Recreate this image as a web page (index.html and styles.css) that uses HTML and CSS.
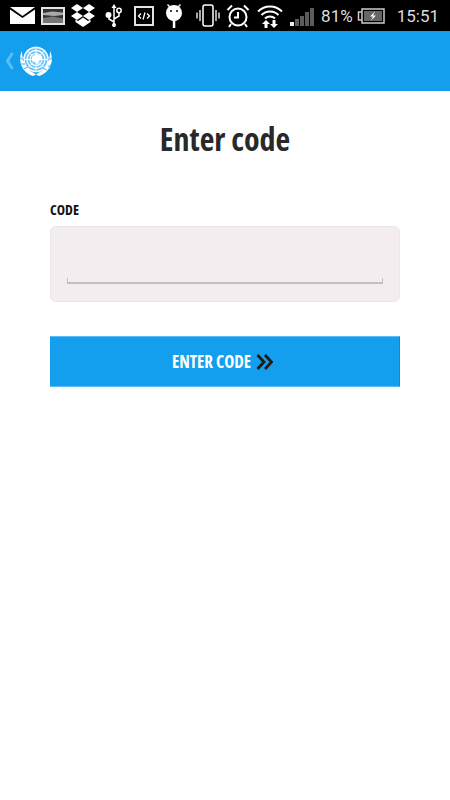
FILE: index.html
```html
<!DOCTYPE html>
<html lang="en">

<head>
    <title>Enter code</title>
    <meta charset="UTF-8">
    <meta name="viewport" content="width=device-width, initial-scale=1">
    <link rel="stylesheet" href="styles.css">
</head>

<body>
    <div class="status-bar">
        <div class="status-left">
            <svg width="25" height="17" viewBox="0 0 25 17"><path d="M0 0h25L12.500 9z" fill="#fff"/><path d="M0 2.500l12.500 8.500L25 2.500V17H0z" fill="#fff"/></svg>
            <svg class="icon-gallery" width="24" height="18" viewBox="0 0 24 18"><rect x="1" y="1" width="22" height="16" fill="#333" stroke="#e4e4e4" stroke-width="2"/><path d="M2 6l9-1.500 11 1v2.500l-9 1-11-1z" fill="#aaa"/><path d="M2 11l10-1.500 10 2V16H2z" fill="#777"/></svg>
            <svg class="icon-dropbox" width="24" height="23" viewBox="0 0 24 23" fill="#fff"><path d="M6 0l6 4-6 4-6-4z"/><path d="M18 0l6 4-6 4-6-4z"/><path d="M6 8l6 4-6 4-6-4z"/><path d="M18 8l6 4-6 4-6-4z"/><path d="M12 13.500l5 3.500 2.500-1.500V18L12 23l-7.500-5v-2.500L7 17z"/></svg>
            <svg class="icon-usb" width="18" height="24" viewBox="0 0 18 24" fill="none" stroke="#fff" stroke-width="1.500"><path d="M9 2v21M9 18l-5-3v-2M9 15l5-3V9"/><circle cx="3.500" cy="11" r="2.200" fill="#fff"/><circle cx="14" cy="6.500" r="2.200"/><circle cx="9" cy="21" r="2" fill="#fff" stroke="none"/><path d="M9 0l2.500 4h-5z" fill="#fff" stroke="none"/></svg>
            <svg class="icon-code" width="20" height="20" viewBox="0 0 20 20"><rect x="1" y="1" width="18" height="18" fill="none" stroke="#e4e4e4" stroke-width="2"/><path d="M7 7.500L4.500 10 7 12.500M13 7.500l2.500 2.500-2.500 2.500M11 6.500l-2 7" fill="none" stroke="#fff" stroke-width="1.300"/></svg>
            <svg class="icon-android" width="16" height="24" viewBox="0 0 16 24" fill="#fff"><circle cx="8" cy="9" r="8"/><rect x="6.800" y="14" width="2.500" height="10"/><path d="M2 0l3 3-1 1-3-3zM14 0l-3 3 1 1 3-3z"/><circle cx="5" cy="7" r="1" fill="#000"/><circle cx="11" cy="7" r="1" fill="#000"/></svg>
            <svg class="icon-vibrate" width="24" height="24" viewBox="0 0 24 24" fill="none" stroke="#ddd" stroke-width="1.500"><rect x="7" y="1" width="10" height="21" rx="2" stroke="#fff"/><path d="M4 6v11M1 8.500v6M20 6v11M23 8.500v6"/></svg>
        </div>
        <div class="status-right">
            <svg width="24" height="24" viewBox="0 0 24 24" fill="none" stroke="#fff" stroke-width="2"><circle cx="12" cy="13" r="8.500"/><path d="M12 8v5.500H8M1.500 6L6 1.500M22.500 6L18 1.500M5 20l-2 3M19 20l2 3"/></svg>
            <svg class="icon-wifi" width="26" height="27" viewBox="0 0 26 27" fill="none" stroke="#fff" stroke-width="2"><path d="M1 9.500a17 17 0 0 1 24 0M4.500 13a12 12 0 0 1 17 0M8 16.500a7 7 0 0 1 10 0"/><path d="M9 18l-4 4h2.500v4h3v-4H13zM17 26l4-4h-2.500v-4h-3v4H13z" fill="#fff" stroke="none"/></svg>
            <svg class="icon-signal" width="24" height="18" viewBox="0 0 24 18"><rect x="0" y="14" width="4" height="4" fill="#eee"/><rect x="5" y="11" width="4" height="7" fill="#5c5c5c"/><rect x="10" y="8" width="4" height="10" fill="#5c5c5c"/><rect x="15" y="4" width="4" height="14" fill="#5c5c5c"/><rect x="20" y="0" width="4" height="18" fill="#5c5c5c"/></svg>
            <span class="status-text">81%</span>
            <svg width="28" height="16" viewBox="0 0 28 16"><path d="M5 4H1.500v8H5" fill="none" stroke="#ccc" stroke-width="1.500"/><rect x="5" y="1" width="22" height="14" fill="none" stroke="#ccc" stroke-width="1.500"/><rect x="7" y="3" width="18" height="10" fill="#666"/><path d="M18 3.500l-5 5h3l-2 4 5-5h-3z" fill="#fff"/></svg>
            <span class="status-text status-time">15:51</span>
        </div>
    </div>

    <header class="app-bar">
        <svg class="back" width="11" height="18" viewBox="0 0 11 18"><path d="M8.500 1L3.500 9l5 8" fill="none" stroke="#5bbcf6" stroke-width="3"/></svg>
        <svg class="un-logo" width="34" height="31" viewBox="0 0 34 31">
            <circle cx="17" cy="13.500" r="13" fill="#6cc4f6"/>
            <circle cx="17" cy="13.500" r="12" fill="none" stroke="#fff" stroke-width="1.300"/>
            <circle cx="17" cy="13.500" r="9" fill="none" stroke="#fff" stroke-width="1.300"/>
            <circle cx="17" cy="13.500" r="6" fill="none" stroke="#fff" stroke-width="1.100"/>
            <path d="M17 1v25M4.500 13.500h25M8.200 4.700l17.600 17.600M25.800 4.700L8.200 22.300" stroke="#fff" stroke-width=".9"/>
            <path d="M13 11l4-3 5 2 1 4-3 1-1 4-3-3-3-1z" fill="#fff"/>
            <path d="M3 5C-1 13 1 25 14 30l3-1.500-3-2C7 24 3 15 3 5zM31 5c4 8 2 20-11 25l-3-1.500 3-2c7-2.500 11-11.500 11-21.500z" fill="#fff"/>
            <path d="M1 12l4 2M2 18l4 0M5 23l4-2M29 21l4-3M28 24l-4-2M33 12l-4 2" stroke="#149eee" stroke-width=".8"/>
        </svg>
    </header>

    <main class="content">
        <h1 class="title">Enter code</h1>
        <form class="code-form" action="">
            <label class="field-label" for="code">CODE</label>
            <div class="field-box">
                <input type="text" id="code" class="field-input">
            </div>
            <button type="button" class="submit">
                ENTER CODE
                <svg width="17" height="16" viewBox="0 0 17 16"><path d="M1.500 1L8 8l-6.500 7M9 1l6.500 7L9 15" fill="none" stroke="#221a14" stroke-width="2.800"/></svg>
            </button>
        </form>
    </main>
</body>

</html>
```

FILE: styles.css
```css
body {
    margin: 0;
    background: #fff;
    font-family: "Open Sans", "Liberation Sans", sans-serif;
}

.status-bar {
    height: 31px;
    background: #000;
    display: flex;
    justify-content: space-between;
    align-items: center;
    padding: 0 11px 0 10px;
    overflow: hidden;
}

.status-left,
.status-right {
    display: flex;
    align-items: center;
}

.status-right {
    gap: 4px;
}

.icon-gallery {
    margin-left: 6px;
}

.icon-dropbox {
    margin-left: 6px;
}

.icon-usb {
    margin-left: 10px;
}

.icon-code {
    margin-left: 11px;
}

.icon-android {
    margin-left: 12px;
}

.icon-vibrate {
    margin-left: 14px;
}

.status-text {
    font-family: Roboto, "Liberation Sans", sans-serif;
    font-size: 17px;
    color: #ddd;
}

.status-time {
    margin-left: 8px;
}

.icon-wifi {
    margin: 0 3px;
}

.icon-signal {
    margin-right: 3px;
    margin-top: 2px;
}

.app-bar {
    height: 60px;
    background: #149eee;
    display: flex;
    align-items: center;
    padding-left: 4px;
    gap: 4px;
}

.content {
    padding: 0 50px;
}

.title {
    margin: 0;
    padding-top: 28px;
    text-align: center;
    font-size: 32px;
    line-height: 40px;
    font-weight: 700;
    font-stretch: 75%;
    color: #292929;
}

.code-form {
    display: flex;
    flex-direction: column;
    padding-top: 41px;
}

.field-label {
    font-size: 14px;
    line-height: 20px;
    font-weight: 700;
    font-stretch: 75%;
    color: #111;
    margin-bottom: 6px;
}

.field-box {
    height: 74px;
    background: #f3edef;
    border: 1px solid #ebe6e8;
    border-radius: 6px;
    padding: 0 16px;
    display: flex;
    align-items: flex-end;
}

.field-input {
    width: 100%;
    height: 6px;
    margin-bottom: 17px;
    box-sizing: border-box;
    background: transparent;
    border: 0;
    border-left: 1px solid #c4bebf;
    border-right: 1px solid #c4bebf;
    border-bottom: 2px solid #c4bebf;
    padding: 0;
}

.submit {
    margin-top: 34px;
    height: 51px;
    background: #149eee;
    border: 0;
    border-top: 1px solid #5bbcf6;
    border-bottom: 1px solid #5bbcf6;
    border-right: 1px solid #1189d0;
    color: #fff;
    font-family: inherit;
    font-size: 17px;
    font-weight: 700;
    font-stretch: 75%;
    display: flex;
    justify-content: center;
    align-items: center;
    gap: 5px;
    padding: 0 4px 0 0;
}
```
